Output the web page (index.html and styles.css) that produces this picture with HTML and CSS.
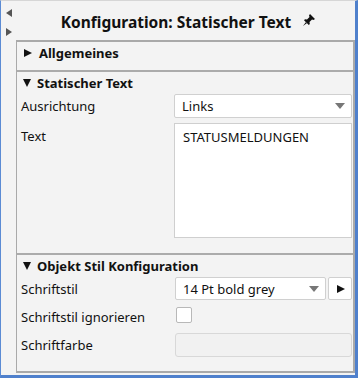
FILE: index.html
```html
<!DOCTYPE html>
<html lang="de">
<head>
    <meta charset="UTF-8">
    <title>Konfiguration</title>
    <link rel="stylesheet" href="styles.css">
</head>
<body>
    <div class="frame">
        <div class="side">
            <span class="arrow arrowLeft"></span>
            <span class="arrow arrowRight"></span>
        </div>
        <div class="main">
            <div class="title">
                <span>Konfiguration: Statischer Text</span>
                <svg class="pin" width="14" height="14" viewBox="0 0 14 14">
                    <path d="M8 1 L13 6 L11.5 7 L10 6.5 L7.5 9 L7.8 11 L6.8 12 L2 7.2 L3 6.2 L5 6.5 L7.5 4 L7 2.5 Z M4 9 L1 13 L5 10 Z" fill="#111"/>
                </svg>
            </div>
            <div class="panel">
                <div class="section collapsed">
                    <div class="head"><span class="tri closed"></span>Allgemeines</div>
                </div>
                <div class="section">
                    <div class="head"><span class="tri open"></span>Statischer Text</div>
                    <div class="row">
                        <div class="label">Ausrichtung</div>
                        <div class="select"><span>Links</span><span class="caret"></span></div>
                    </div>
                    <div class="row top">
                        <div class="label">Text</div>
                        <div class="area">STATUSMELDUNGEN</div>
                    </div>
                </div>
                <div class="section last">
                    <div class="head"><span class="tri open"></span>Objekt Stil Konfiguration</div>
                    <div class="row">
                        <div class="label">Schriftstil</div>
                        <div class="combo">
                            <div class="select"><span>14 Pt bold grey</span><span class="caret"></span></div>
                            <div class="go"><span class="goArrow"></span></div>
                        </div>
                    </div>
                    <div class="row check">
                        <div class="label">Schriftstil ignorieren</div>
                        <div class="box"></div>
                    </div>
                    <div class="row">
                        <div class="label">Schriftfarbe</div>
                        <div class="input off"></div>
                    </div>
                </div>
            </div>
        </div>
    </div>
</body>
</html>
```
FILE: styles.css
```css
*{margin:0;padding:0;box-sizing:border-box;}
body{width:358px;height:378px;overflow:hidden;background:#f3f3f3;font-family:"Noto Sans",sans-serif;font-size:13px;color:#111;}
.frame{display:flex;width:358px;height:378px;border-left:1px solid #5b8bd4;border-right:3px solid #4f80cc;border-bottom:3px solid #4f80cc;border-top:1px solid #d6d6d6;background:#f3f3f3;}
.side{width:15px;flex:none;display:flex;flex-direction:column;align-items:center;padding-top:8px;gap:11px;}
.arrow{width:0;height:0;border-top:4px solid transparent;border-bottom:4px solid transparent;}
.arrowLeft{border-right:6px solid #555;}
.arrowRight{border-left:6px solid #555;}
.main{flex:1;display:flex;flex-direction:column;}
.title{flex:none;height:39px;display:flex;align-items:center;justify-content:center;gap:11px;font-size:15.5px;font-weight:bold;padding-left:6px;padding-top:2px;}
.pin{margin-top:-3px;}
.panel{flex:none;border-top:2px solid #a9a9a9;border-left:1px solid #a9a9a9;border-right:2px solid #a9a9a9;border-bottom:2px solid #a9a9a9;}
.section{border-bottom:2px solid #ababab;padding:0 0 15px 4px;}
.section.collapsed{height:30px;padding-bottom:0;padding-top:0;}
.section.last{border-bottom:none;padding-bottom:14px;}
.head{height:22px;display:flex;align-items:center;font-weight:bold;padding-left:2px;}
.tri{width:0;height:0;margin-right:6px;}
.tri.closed{border-left:8px solid #111;border-top:4.5px solid transparent;border-bottom:4.5px solid transparent;margin-left:1px;margin-right:7px;}
.tri.open{border-top:8px solid #111;border-left:4.5px solid transparent;border-right:4.5px solid transparent;}
.row{display:flex;align-items:center;justify-content:space-between;padding-right:1px;margin-top:5px;}
.head + .row{margin-top:0;}
.row.top{align-items:flex-start;}
.row.top .label{padding-top:4px;}
.row.check{height:23px;}
.label{width:153px;}
.select{flex:1;height:24px;background:#fff;border:1px solid #d0d0d0;border-radius:2px;display:flex;align-items:center;justify-content:space-between;padding:0 6px 0 7px;width:177px;}
.caret{width:0;height:0;border-left:5px solid transparent;border-right:5px solid transparent;border-top:6px solid #777;}
.area{width:178px;height:115px;background:#fff;border:1px solid #cfcfcf;padding:4px 8px;}
.combo{display:flex;width:177px;gap:2px;}
.combo .select{width:151px;flex:none;height:23px;}
.go{width:24px;height:23px;background:#fff;border:1px solid #d0d0d0;border-radius:2px;display:flex;align-items:center;justify-content:center;}
.goArrow{width:0;height:0;border-left:8px solid #111;border-top:4.5px solid transparent;border-bottom:4.5px solid transparent;margin-left:2px;}
.box{width:16px;height:16px;background:#fff;border:1px solid #b8b8b8;border-radius:2px;margin-right:160px;margin-top:-3px;}
.input{width:177px;height:24px;border:1px solid #d8d8d8;border-radius:3px;}
.input.off{background:#f1f1f1;}
```
